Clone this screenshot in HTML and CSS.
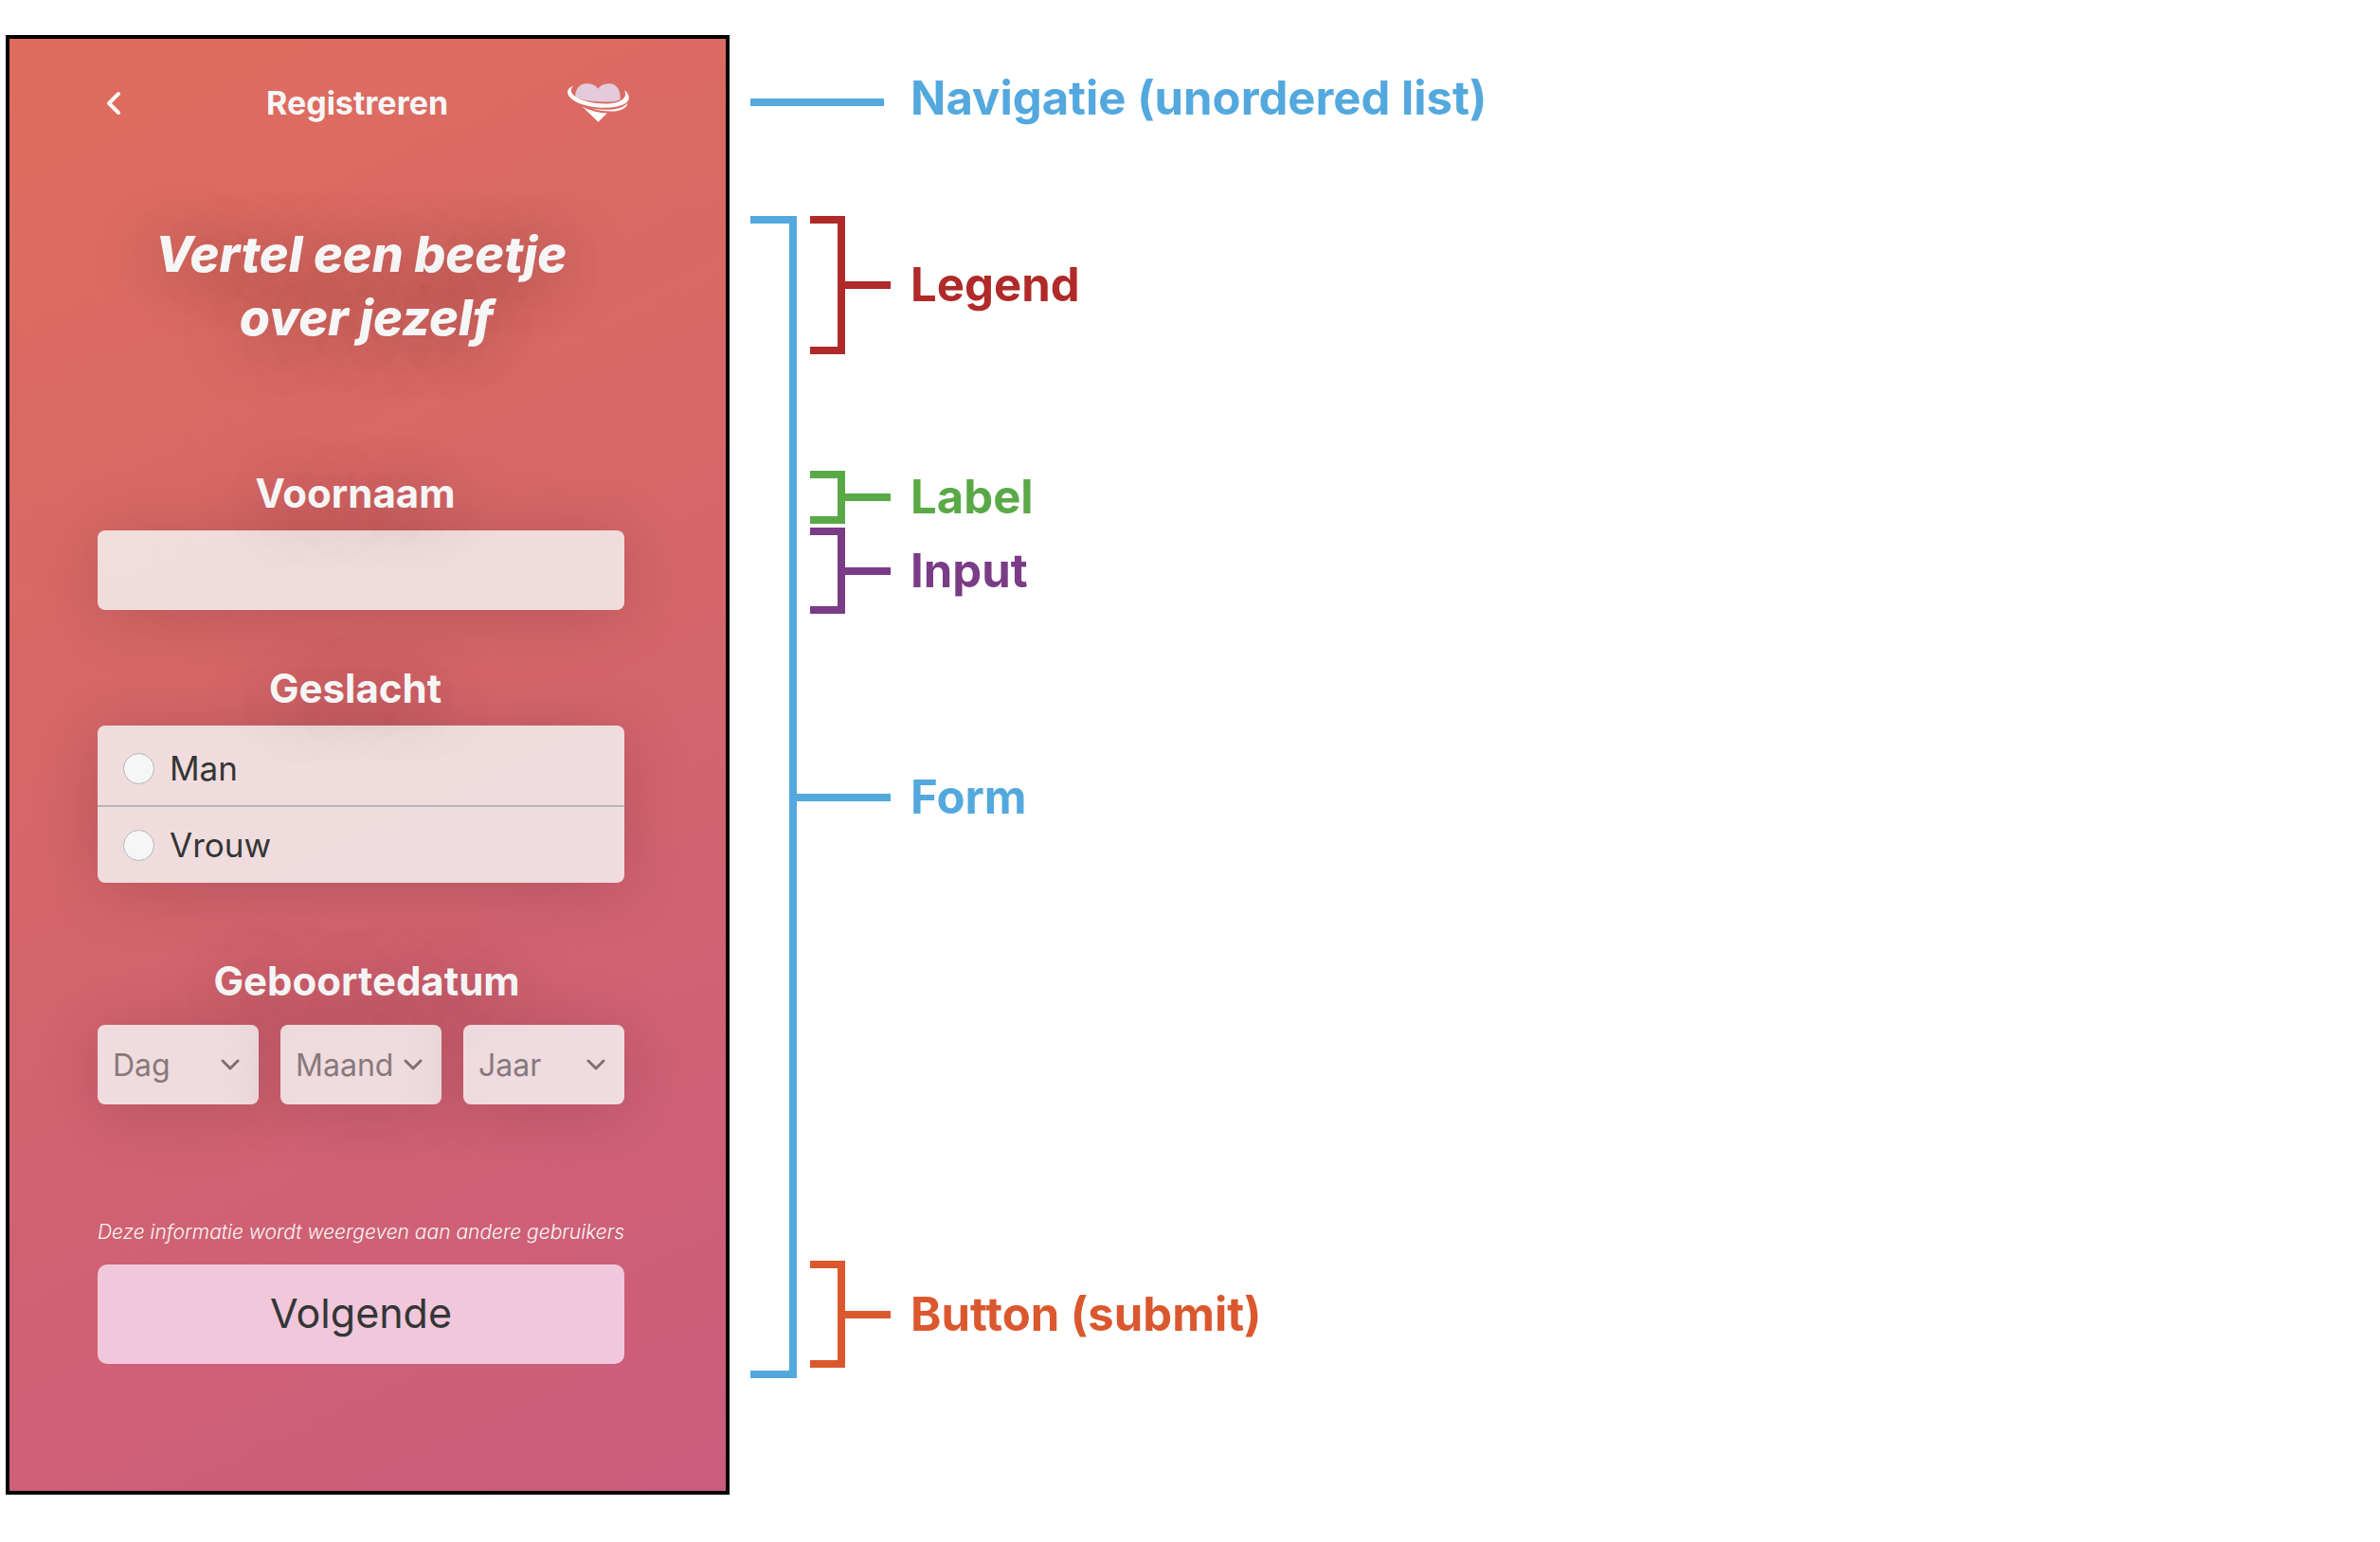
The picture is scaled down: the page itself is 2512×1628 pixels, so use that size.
FILE: index.html
```html
<!DOCTYPE html>
<html lang="nl">
<head>
<meta charset="utf-8">
<meta name="viewport" content="width=device-width, initial-scale=1">
<title>Registreren</title>
<link rel="stylesheet" href="styles.css">
</head>
<body>
<main class="breakdown">
  <section class="phone">
    <nav>
      <ul class="nav-list">
        <li><a class="back" href="#" aria-label="Terug"><svg width="15" height="26" viewBox="0 0 15 26" fill="none" stroke="#f6f6f6" stroke-width="4" stroke-linecap="round" stroke-linejoin="round"><path d="M13 3 3 13l10 10"/></svg></a></li>
        <li><h1 class="nav-title">Registreren</h1></li>
        <li><a class="logo" href="#" aria-label="Home"><svg width="66" height="41" viewBox="56 56 196 122"><path fill="#e4cadb" d="M84 99C81 76 96 57 118 57c18 0 29 5 37 16 8-11 18-16 38-16 22 2 34 24 31 50-10 4-24 7-40 7-44 0-78-4-100-15z"/><path fill="#fff" d="M77 64c-12 12-9 25 12 37 33 19 97 25 131 12 20-8 25-20 17-36 20 15 20 35-2 45-40 18-115 11-151-9-30-17-34-39-7-49z"/><path fill="#fff" d="M248 117c-3 18-22 27-52 27-24 0-44-3-60-9 50 8 96 4 112-18z"/><path fill="#fff" d="M105 129c22 12 46 19 78 21l-28 27z"/></svg></a></li>
      </ul>
    </nav>
    <form>
      <fieldset class="group">
        <legend class="headline">Vertel een beetje<br>&nbsp;over jezelf</legend>
        <div class="field">
          <label class="caption" for="voornaam">Voornaam</label>
          <input class="text-input" type="text" id="voornaam">
        </div>
        <fieldset class="group field">
          <legend class="caption">Geslacht</legend>
          <div class="options">
            <label class="option"><input type="radio" name="geslacht">Man</label>
            <label class="option"><input type="radio" name="geslacht">Vrouw</label>
          </div>
        </fieldset>
        <fieldset class="group birth">
          <legend class="caption caption-wide">Geboortedatum</legend>
          <div class="dates">
            <div class="picker"><select aria-label="Dag"><option>Dag</option></select><svg width="20" height="13" viewBox="0 0 20 13"><path d="m2 2 8 8 8-8"/></svg></div>
            <div class="picker"><select aria-label="Maand"><option>Maand</option></select><svg width="20" height="13" viewBox="0 0 20 13"><path d="m2 2 8 8 8-8"/></svg></div>
            <div class="picker"><select aria-label="Jaar"><option>Jaar</option></select><svg width="20" height="13" viewBox="0 0 20 13"><path d="m2 2 8 8 8-8"/></svg></div>
          </div>
        </fieldset>
      </fieldset>
      <p class="hint">Deze informatie wordt weergeven aan andere gebruikers</p>
      <button class="submit" type="submit">Volgende</button>
    </form>
  </section>
  <aside class="notes">
    <p class="note note-nav">Navigatie (unordered list)</p>
    <div class="form-notes">
      <p class="note note-form">Form</p>
      <p class="note note-legend">Legend</p>
      <p class="note note-label">Label</p>
      <p class="note note-input">Input</p>
      <p class="note note-button">Button (submit)</p>
    </div>
  </aside>
</main>
</body>
</html>
```
FILE: styles.css
```css
*, *::before, *::after {
  box-sizing: border-box;
}

body {
  margin: 0;
  padding: 37px 0 48px 6px;
  background: #fff;
  font-family: Inter, "Liberation Sans", sans-serif;
}

h1, p, ul {
  margin: 0;
  padding: 0;
}

.breakdown {
  display: grid;
  grid-template-columns: 7fr 16fr;
  align-items: start;
}

/* Phone screen */
.phone {
  padding: 0 107px 134px 93px;
  border: 4px solid #000;
  background: linear-gradient(155deg, #df6d5d, #d5656b 50%, #ca5c7e);
  color: #f6f6f6;
}

.nav-list {
  display: grid;
  grid-template-columns: 1fr auto 1fr;
  align-items: center;
  height: 135px;
  padding-right: 8px;
  list-style: none;
}

.nav-list li:last-child {
  justify-self: end;
}

.back, .logo {
  display: inline-flex;
  vertical-align: middle;
}

.back {
  margin-left: 9px;
}

.logo {
  margin-right: -13px;
}

.nav-title {
  font-size: 34px;
  line-height: 40px;
  font-weight: 700;
}

form {
  padding-top: 59px;
}

.group {
  min-width: 0;
  margin: 0;
  padding: 0;
  border: 0;
}

.headline, .caption {
  display: block;
  width: 100%;
  padding: 0;
  text-align: center;
  text-shadow: 0 6px 70px rgba(0, 0, 0, .4);
}

.headline {
  margin-bottom: 127px;
  font-size: 52px;
  line-height: 67px;
  font-weight: 800;
  font-style: italic;
}

.caption {
  margin-bottom: 14px;
  padding-right: 12px;
  font-size: 42px;
  line-height: 50px;
  font-weight: 700;
}

.caption-wide {
  margin-bottom: 21px;
  padding: 0 0 0 12px;
}

.field {
  margin-bottom: 58px;
}

.text-input, .options, .picker select {
  display: block;
  width: 100%;
  border: 0;
  border-radius: 8px;
  background: rgba(246, 246, 246, .82);
  box-shadow: 0 6px 70px rgba(0, 0, 0, .16);
}

.text-input {
  height: 84px;
  padding: 0 24px;
  font: inherit;
  font-size: 34px;
}

.options {
  padding-top: 6px;
}

.option {
  display: flex;
  align-items: center;
  gap: 16px;
  height: 80px;
  padding-left: 27px;
  color: #333635;
  font-size: 35px;
}

.option:first-child {
  border-bottom: 2px solid #b4b6b8;
}

.option input {
  appearance: none;
  width: 33px;
  height: 33px;
  margin: 0;
  border: 1px solid #b4b6b8;
  border-radius: 50%;
  background: #f6f6f6;
}

.birth {
  margin-top: 79px;
}

.dates {
  display: grid;
  grid-template-columns: repeat(3, 1fr);
  gap: 23px;
}

.picker {
  display: grid;
  align-items: center;
}

.picker select, .picker svg {
  grid-area: 1 / 1;
}

.picker select {
  appearance: none;
  height: 84px;
  padding: 0 0 0 16px;
  color: #87797b;
  font-family: inherit;
  font-size: 32px;
}

.picker svg {
  justify-self: end;
  margin-right: 20px;
  fill: none;
  stroke: #7d7173;
  stroke-width: 3;
  stroke-linecap: round;
  stroke-linejoin: round;
  pointer-events: none;
}

.hint {
  margin: 120px 0 19px;
  font-size: 21px;
  line-height: 30px;
  font-weight: 300;
  font-style: italic;
  text-align: center;
  white-space: nowrap;
}

.submit {
  display: block;
  width: 100%;
  height: 105px;
  padding: 0 0 4px;
  border: 0;
  border-radius: 10px;
  background: #f1c7db;
  color: #333635;
  font-family: inherit;
  font-size: 43px;
}

/* Annotations */
.notes {
  padding: 37px 0 0 22px;
}

.note {
  display: flex;
  align-items: center;
  color: var(--ink);
  font-size: 49px;
  line-height: 60px;
  font-weight: 700;
  white-space: nowrap;
}

.note::before, .note::after {
  content: "";
  order: -1;
}

.note::before {
  align-self: stretch;
  width: 37px;
  border: 8px solid var(--ink);
  border-left: 0;
}

.note::after {
  width: 48px;
  height: 8px;
  margin-right: 21px;
  background: var(--ink);
}

.note-nav {
  --ink: #53a8de;
}

.note-nav::before {
  display: none;
}

.note-nav::after {
  width: 141px;
  margin: 8px 28px 0 0;
}

.form-notes {
  display: grid;
  grid-template-columns: 63px 1fr;
  grid-template-rows: 146px 123px 56px 4px 91px 683px 113px 11px;
  margin-top: 94px;
}

.note-form {
  grid-area: 1 / 1 / -1 / -1;
  --ink: #53a8de;
}

.note-form::before {
  width: 49px;
}

.note-form::after {
  width: 99px;
}

.note-legend {
  grid-area: 1 / 2;
  --ink: #af2a29;
}

.note-label {
  grid-area: 3 / 2;
  --ink: #5aa947;
}

.note-input {
  grid-area: 5 / 2;
  --ink: #7a3b87;
}

.note-button {
  grid-area: 7 / 2;
  --ink: #db582f;
}
```
